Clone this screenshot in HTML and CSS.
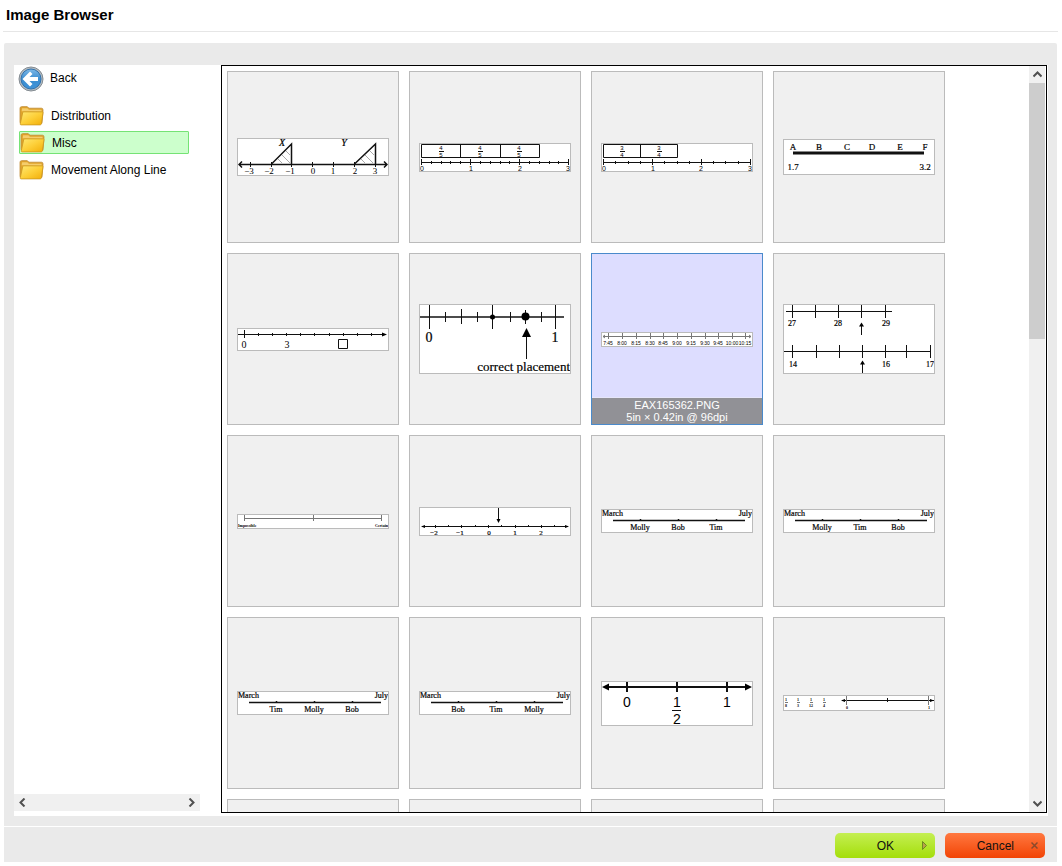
FILE: index.html
```html
<!DOCTYPE html>
<html lang="en">
<head>
    <meta charset="UTF-8">
    <meta name="viewport" content="width=device-width, initial-scale=1.0">
    <title>Image Browser</title>
    <link rel="stylesheet" href="styles.css">
</head>
<body>
    <svg class="defs" width="0" height="0">
        <defs>
            <linearGradient id="folderFront" x1="0" y1="0" x2="1" y2="1">
                <stop offset="0" stop-color="#ffe873"/>
                <stop offset="0.5" stop-color="#fdcf38"/>
                <stop offset="1" stop-color="#f2ae08"/>
            </linearGradient>
            <linearGradient id="backBlue" x1="0" y1="0" x2="0" y2="1">
                <stop offset="0" stop-color="#7db9e8"/>
                <stop offset="0.5" stop-color="#3c8dd0"/>
                <stop offset="1" stop-color="#3f93d8"/>
            </linearGradient>
            <symbol id="folder" viewBox="0 0 24 20">
                <path d="M1 17V3q0-1.500 1.500-1.500h5.500l1.500 1.500h12q1.500 0 1.500 1.500v2l-1 11H2z" fill="#e0a32a" stroke="#c08c34" stroke-width=".8"/>
                <path d="M2.500 6l.5-3h5l1.500 1.500h12l.5 2z" fill="#f5cd6c"/>
                <path d="M4.500 6.500h18q.7 0 .5 1l-1.500 10.500q-.2 1-1.200 1H2q-1 0-.8-1L3.500 7.500q.2-1 1-1z" fill="url(#folderFront)" stroke="#cf9a22" stroke-width=".8"/>
            </symbol>
        </defs>
    </svg>

    <header class="title-bar">
        <h1>Image Browser</h1>
    </header>

    <main class="panel">
        <nav class="sidebar">
            <a class="back" href="#">
                <svg width="26" height="26" viewBox="0 0 26 26">
                    <circle cx="13" cy="13" r="12" fill="#b4bcc2" stroke="#858c92"/>
                    <circle cx="13" cy="13" r="10" fill="url(#backBlue)" stroke="#3272ac"/>
                    <path d="M4.500 13L12 5.500l2.500 2.500-3 3H20v4h-8.500l3 3L12 20.500z" fill="#fff"/>
                </svg>
                Back
            </a>
            <ul class="folders">
                <li><a href="#"><svg width="25" height="21"><use href="#folder"/></svg>Distribution</a></li>
                <li><a href="#" class="selected"><svg width="25" height="21"><use href="#folder"/></svg>Misc</a></li>
                <li><a href="#"><svg width="25" height="21"><use href="#folder"/></svg>Movement Along Line</a></li>
            </ul>
            <div class="scroll-x">
                <button type="button" aria-label="Scroll left"><svg width="9" height="9"><path d="M6.500 0.500L2.500 4.500L6.500 8.500"/></svg></button>
                <button type="button" aria-label="Scroll right"><svg width="9" height="9"><path d="M2.500 0.500L6.500 4.500L2.500 8.500"/></svg></button>
            </div>
        </nav>

        <section class="gallery">
            <div class="tiles">
                <button type="button" class="tile">
                    <svg class="thumb serif" viewBox="0 0 150 36">
                        <path class="line bold" d="M1 25.500H149M4 22.500l-3 3 3 3M146 22.500l3 3-3 3"/>
                        <path class="line" d="M12.500 23v5M33.500 23v5M53.500 23v5M74.500 23v5M95.500 23v5M116.500 23v5M137.500 23v5"/>
                        <path class="hatch" d="M40 20l4 4M44 16l8 8M48 12l4 4M123 20l4 4M127 16l8 8M132 12l4 4"/>
                        <path class="line bold" d="M33.500 25L53.500 5V25M116.500 25L137.500 5V25"/>
                        <g class="t10 italic strong-stroke"><text x="44" y="7">X</text><text x="106" y="7">Y</text></g>
                        <g class="t9"><text x="11" y="35">−3</text><text x="31" y="35">−2</text><text x="52" y="35">−1</text><text x="75" y="35">0</text><text x="95" y="35">1</text><text x="117" y="35">2</text><text x="137" y="35">3</text></g>
                    </svg>
                </button>
                <button type="button" class="tile">
                    <svg class="thumb sans" viewBox="0 0 150 27">
                        <path class="line" d="M1.500 .500H119.500V13.500H1.500zM40.500 0V13M80.500 0V13M1.500 18.500H148.500"/>
                        <path class="line" d="M1.500 15v6M11.500 17v3M21.500 17v3M30.500 17v3M40.500 17v3M50.500 15v6M60.500 17v3M70.500 17v3M80.500 17v3M89.500 17v3M99.500 15v6M109.500 17v3M119.500 17v3M129.500 17v3M138.500 17v3M148.500 15v6M19 7.500h5M58 7.500h5M97 7.500h5"/>
                        <g class="t6"><text x="21" y="6">4</text><text x="21" y="13">5</text><text x="60" y="6">4</text><text x="60" y="13">5</text><text x="99" y="6">4</text><text x="99" y="13">5</text></g>
                        <g class="t7"><text x="2" y="27">0</text><text x="51" y="27">1</text><text x="100" y="27">2</text><text x="148" y="27">3</text></g>
                    </svg>
                </button>
                <button type="button" class="tile">
                    <svg class="thumb sans" viewBox="0 0 150 27">
                        <path class="line" d="M1.500 .500H75.500V13.500H1.500zM38.500 0V13M1.500 18.500H148.500"/>
                        <path class="line" d="M1.500 15v6M13.500 17v3M26.500 17v3M38.500 17v3M50.500 15v6M62.500 17v3M75.500 17v3M87.500 17v3M99.500 15v6M111.500 17v3M123.500 17v3M136.500 17v3M148.500 15v6M18 7.500h5M55 7.500h5"/>
                        <g class="t6"><text x="20" y="6">3</text><text x="20" y="13">4</text><text x="57" y="6">3</text><text x="57" y="13">4</text></g>
                        <g class="t7"><text x="2" y="27">0</text><text x="51" y="27">1</text><text x="99" y="27">2</text><text x="148" y="27">3</text></g>
                    </svg>
                </button>
                <button type="button" class="tile">
                    <svg class="thumb serif" viewBox="0 0 150 34">
                        <path class="line thick" d="M9 13H140"/>
                        <g class="t9 strong-stroke"><text x="9" y="10">A</text><text x="35" y="10">B</text><text x="63" y="10">C</text><text x="88" y="10">D</text><text x="116" y="10">E</text><text x="141" y="10">F</text></g>
                        <g class="t9 strong-stroke"><text x="9" y="30">1.7</text><text x="141" y="30">3.2</text></g>
                    </svg>
                </button>

                <button type="button" class="tile">
                    <svg class="thumb serif" viewBox="0 0 150 21">
                        <path class="line" d="M0 5.500H146M6.500 1v8M20.500 4v3M34.500 4v3M48.500 4v3M62.500 4v3M76.500 4v3M91.500 4v3M105.500 4v3M119.500 4v3M133.500 4v3"/>
                        <path d="M144 3.500l5 2-5 2z"/>
                        <path class="line" d="M100.500 10.500h9v9h-9z"/>
                        <g class="t10"><text x="6" y="19">0</text><text x="49" y="19">3</text></g>
                    </svg>
                </button>
                <button type="button" class="tile">
                    <svg class="thumb serif" viewBox="0 0 150 68">
                        <path class="line bold" d="M0 12H144"/>
                        <path class="line" d="M9.500 0V24M25.500 7v10M41.500 4v15M57.500 7v10M72.500 0V24M90.500 7v10M105.500 5v14M121.500 7v10M135.500 0V24"/>
                        <circle cx="72.500" cy="12" r="2.500"/><circle cx="105.500" cy="11.500" r="4"/>
                        <path class="line" d="M106.500 54V30"/>
                        <path d="M106.500 23l4.500 9h-9z"/>
                        <g class="t14 strong-stroke"><text x="9" y="37">0</text><text x="135" y="37">1</text></g>
                        <text class="t13 end strong-stroke" x="150" y="66">correct placement</text>
                    </svg>
                </button>
                <button type="button" class="tile active">
                    <svg class="thumb sans" viewBox="0 0 150 13">
                        <path class="line soft" d="M1 3.500H149M3 2l-2 1.500 2 1.500M147 2l2 1.500-2 1.500M6.500 0v6M20.500 0v6M34.500 0v6M48.500 0v6M61.500 0v6M75.500 0v6M89.500 0v6M103.500 0v6M116.500 0v6M130.500 0v6M143.500 0v6"/>
                        <g class="t5"><text x="6" y="12">7:45</text><text x="20" y="12">8:00</text><text x="34" y="12">8:15</text><text x="48" y="12">8:30</text><text x="61" y="12">8:45</text><text x="75" y="12">9:00</text><text x="89" y="12">9:15</text><text x="103" y="12">9:30</text><text x="116" y="12">9:45</text><text x="130" y="12">10:00</text><text x="143" y="12">10:15</text></g>
                    </svg>
                    <span class="caption">EAX165362.PNG<br>5in × 0.42in @ 96dpi</span>
                </button>
                <button type="button" class="tile">
                    <svg class="thumb serif" viewBox="0 0 150 68">
                        <path class="line" d="M2 6.500H108M8.500 0v13M31.500 0v13M54.500 0v13M77.500 0v13M101.500 0v13M0 46.500H147M8.500 40v13M32.500 40v13M55.500 40v13M78.500 40v13M101.500 40v13M122.500 40v13M146.500 40v13M77.500 20v10M78.500 58v10"/>
                        <path d="M77.500 17.500l2.500 4h-5zM78.500 55.500l2.500 4h-5z"/>
                        <g class="t8 strong-stroke"><text x="8" y="21">27</text><text x="54" y="21">28</text><text x="102" y="21">29</text><text x="9" y="62">14</text><text x="102" y="62">16</text><text class="end" x="150" y="62">17</text></g>
                    </svg>
                </button>

                <button type="button" class="tile">
                    <svg class="thumb serif" viewBox="0 0 150 13">
                        <path class="line soft" d="M6 3.500H144M6.500 0v6M75.500 0v6M143.500 0v6"/>
                        <g class="t4 strong"><text class="start" x="0" y="12">Impossible</text><text class="end" x="150" y="12">Certain</text></g>
                    </svg>
                </button>
                <button type="button" class="tile">
                    <svg class="thumb serif" viewBox="0 0 150 27">
                        <path class="line" d="M2 18.500H148M15.500 17v3M28.500 17v2M41.500 17v3M55.500 17v2M68.500 17v3M81.500 17v2M95.500 17v3M108.500 17v2M121.500 17v3M134.500 17v2M78.500 0v12"/>
                        <path d="M1 18.500l4-1.500v3zM149 18.500l-4-1.500v3zM78.500 15l-2-4h4z"/>
                        <g class="t7 strong-stroke"><text x="14" y="27">−2</text><text x="40" y="27">−1</text><text x="69" y="27">0</text><text x="95" y="27">1</text><text x="121" y="27">2</text></g>
                    </svg>
                </button>
                <button type="button" class="tile">
                    <svg class="thumb serif" viewBox="0 0 150 22">
                        <path class="line bold" d="M11 10.500H143M38.500 9v2M76.500 9v2M114.500 9v2"/>
                        <g class="t8 strong-stroke"><text class="start" x="0" y="6">March</text><text class="end" x="150" y="6">July</text><text x="38" y="20">Molly</text><text x="76" y="20">Bob</text><text x="114" y="20">Tim</text></g>
                    </svg>
                </button>
                <button type="button" class="tile">
                    <svg class="thumb serif" viewBox="0 0 150 22">
                        <path class="line bold" d="M11 10.500H143M38.500 9v2M76.500 9v2M114.500 9v2"/>
                        <g class="t8 strong-stroke"><text class="start" x="0" y="6">March</text><text class="end" x="150" y="6">July</text><text x="38" y="20">Molly</text><text x="76" y="20">Tim</text><text x="114" y="20">Bob</text></g>
                    </svg>
                </button>

                <button type="button" class="tile">
                    <svg class="thumb serif" viewBox="0 0 150 22">
                        <path class="line bold" d="M11 10.500H143M38.500 9v2M76.500 9v2M114.500 9v2"/>
                        <g class="t8 strong-stroke"><text class="start" x="0" y="6">March</text><text class="end" x="150" y="6">July</text><text x="38" y="20">Tim</text><text x="76" y="20">Molly</text><text x="114" y="20">Bob</text></g>
                    </svg>
                </button>
                <button type="button" class="tile">
                    <svg class="thumb serif" viewBox="0 0 150 22">
                        <path class="line bold" d="M11 10.500H143M38.500 9v2M76.500 9v2M114.500 9v2"/>
                        <g class="t8 strong-stroke"><text class="start" x="0" y="6">March</text><text class="end" x="150" y="6">July</text><text x="38" y="20">Bob</text><text x="76" y="20">Tim</text><text x="114" y="20">Molly</text></g>
                    </svg>
                </button>
                <button type="button" class="tile">
                    <svg class="thumb sans" viewBox="0 0 150 43">
                        <path class="line heavy" d="M4 5H146M25 0v10M75 0v10M125 0v10"/>
                        <path d="M0 5l7-3.500v7zM150 5l-7-3.500v7z"/>
                        <path class="line" d="M70 28.500h9"/>
                        <g class="t14"><text x="25" y="25">0</text><text x="75" y="25">1</text><text x="125" y="25">1</text><text x="75" y="42">2</text></g>
                    </svg>
                </button>
                <button type="button" class="tile">
                    <svg class="thumb serif" viewBox="0 0 150 14">
                        <path class="line" d="M58 4.500H150M103.500 2v4"/>
                        <path class="line soft" d="M62.500 0v9M144.500 0v9M1 6.500h3M13 6.500h3M26 6.500h3M39 6.500h3"/>
                        <path d="M57 4.500l4-1.500v3zM150 4.500l-4-1.500v3z"/>
                        <g class="t4 strong"><text x="2" y="5">1</text><text x="2" y="11">8</text><text x="14" y="5">1</text><text x="14" y="11">3</text><text x="27" y="5">1</text><text x="27" y="11">12</text><text x="40" y="5">1</text><text x="40" y="11">4</text><text x="63" y="13">0</text><text x="145" y="13">1</text></g>
                    </svg>
                </button>

                <button type="button" class="tile" aria-label="Image"></button>
                <button type="button" class="tile" aria-label="Image"></button>
                <button type="button" class="tile" aria-label="Image"></button>
                <button type="button" class="tile" aria-label="Image"></button>
            </div>
            <div class="scroll-y">
                <button type="button" aria-label="Scroll up"><svg width="9" height="9"><path d="M0.500 6.500L4.500 2.500L8.500 6.500"/></svg></button>
                <div class="track"><div class="knob"></div></div>
                <button type="button" aria-label="Scroll down"><svg width="9" height="9"><path d="M0.500 2.500L4.500 6.500L8.500 2.500"/></svg></button>
            </div>
        </section>
    </main>

    <footer class="actions">
        <button type="button" class="btn ok">OK<svg width="7" height="9"><path d="M1.500 0.500v8l4-4z" fill="#b9a04a" stroke="#6d8a20"/></svg></button>
        <button type="button" class="btn cancel">Cancel<svg width="7" height="9"><path d="M0.500 1.500l6 6M6.500 1.500l-6 6" fill="none" stroke="#8a4a2c" stroke-width="1.500"/></svg></button>
    </footer>
</body>
</html>
```

FILE: styles.css
```css
* {
    box-sizing: border-box;
}
body {
    display: flex;
    flex-direction: column;
    height: 100vh;
    margin: 0;
    padding: 0 5px 4px 4px;
    background: #fff;
    color: #000;
    font-family: "Liberation Sans", Arial, sans-serif;
    font-size: 12px;
}
button {
    padding: 0;
    border: none;
    font-family: inherit;
    cursor: pointer;
}
a {
    color: #000;
    text-decoration: none;
}
.defs {
    position: absolute;
}

/* title */
.title-bar {
    height: 32px;
    margin: 0 -1px 11px;
    padding: 6px 3px 0;
    border-bottom: 1px solid #e6e6e6;
    flex-shrink: 0;
}
h1 {
    margin: 0;
    font-size: 15px;
    line-height: 18px;
}

/* main area */
.panel {
    flex: 1;
    min-height: 0;
    display: flex;
    padding: 22px 9px 10px 10px;
    border-radius: 2px 2px 0 0;
    background: #eaeaea;
}
.sidebar {
    flex: 0 0 207px;
    display: flex;
    flex-direction: column;
    padding: 1px 0 5px;
    background: #fff;
}
.back {
    display: flex;
    align-items: flex-start;
    gap: 6px;
    height: 26px;
    margin: 0 0 12px 4px;
    line-height: 24px;
}
.folders {
    flex: 1;
    list-style: none;
    margin: 0;
    padding: 0 32px 0 5px;
}
.folders li {
    margin-bottom: 4px;
}
.folders a {
    display: flex;
    align-items: center;
    gap: 7px;
    height: 23px;
}
.folders a.selected {
    border: 1px solid #75e375;
    border-radius: 1px;
    background: #cfc;
}
.scroll-x {
    display: flex;
    justify-content: space-between;
    height: 17px;
    margin-right: 21px;
    background: #f0f0f0;
}
.scroll-x button,
.scroll-y button {
    display: flex;
    align-items: center;
    justify-content: center;
    width: 17px;
    height: 17px;
    background: #f0f0f0;
}
.scroll-x path,
.scroll-y path {
    fill: none;
    stroke: #505050;
    stroke-width: 2;
}

/* image tiles */
.gallery {
    flex: 1;
    display: flex;
    min-width: 0;
    padding-right: 1px;
    border: 1px solid #000;
    background: #fff;
    box-shadow: 1px 0 #fff, 0 3px #fff, 1px 3px #fff;
    margin: 0 1px 3px 0;
}
.tiles {
    flex: 1;
    display: grid;
    grid-template-columns: repeat(auto-fill, 172px);
    grid-auto-rows: 172px;
    gap: 10px;
    padding: 5px;
    overflow: hidden;
}
.tile {
    position: relative;
    display: flex;
    align-items: center;
    padding: 0 9px;
    border: 1px solid #bbb;
    background: #f0f0f0;
}
.tile.active {
    border-color: #4a8acb;
    background: #ddf;
}
.caption {
    position: absolute;
    left: 0;
    right: 0;
    bottom: 0;
    padding: 1px 0;
    border-top: 1px solid #e6e6fa;
    background: #919196;
    color: #fff;
    font-size: 11px;
    line-height: 12px;
}
.thumb {
    width: 100%;
    border: 1px solid #bbb;
    background: #fff;
    text-anchor: middle;
}
.serif {
    font-family: "Liberation Serif", "Times New Roman", serif;
}
.sans {
    font-family: "Liberation Sans", Arial, sans-serif;
}
.line {
    fill: none;
    stroke: #111;
    stroke-width: 1;
}
.bold {
    stroke-width: 1.5;
}
.heavy {
    stroke-width: 2;
}
.thick {
    stroke-width: 3;
}
.soft {
    stroke: #777;
}
.hatch {
    fill: none;
    stroke: #aaa;
}
.t4 { font-size: 4px; }
.t5 { font-size: 5px; }
.t6 { font-size: 6px; }
.t7 { font-size: 7px; }
.t8 { font-size: 8px; }
.t9 { font-size: 9px; }
.t10 { font-size: 10px; }
.t13 { font-size: 13px; }
.t14 { font-size: 14px; }
.italic { font-style: italic; }
.strong { font-weight: bold; }
.strong-stroke {
    stroke: #000;
    stroke-width: 0.2;
}
.start { text-anchor: start; }
.end { text-anchor: end; }

.scroll-y {
    display: flex;
    flex-direction: column;
    flex: 0 0 16px;
    background: #f0f0f0;
}
.scroll-y button {
    width: 16px;
}
.track {
    flex: 1;
}
.knob {
    height: 36%;
    background: #cdcdcd;
}

/* bottom buttons */
.actions {
    display: flex;
    justify-content: flex-end;
    gap: 10px;
    margin-top: 1px;
    padding: 6px 12px 4px;
    background: #eaeaea;
}
.btn {
    display: flex;
    align-items: center;
    justify-content: flex-end;
    width: 100px;
    height: 25px;
    padding-right: 7px;
    border-radius: 5px;
    color: #111;
    font-size: 12px;
}
.ok {
    gap: 27px;
    background: linear-gradient(#c4ef52, #a4de0a);
}
.cancel {
    gap: 17px;
    background: linear-gradient(#ff7840, #f24405);
}
```
